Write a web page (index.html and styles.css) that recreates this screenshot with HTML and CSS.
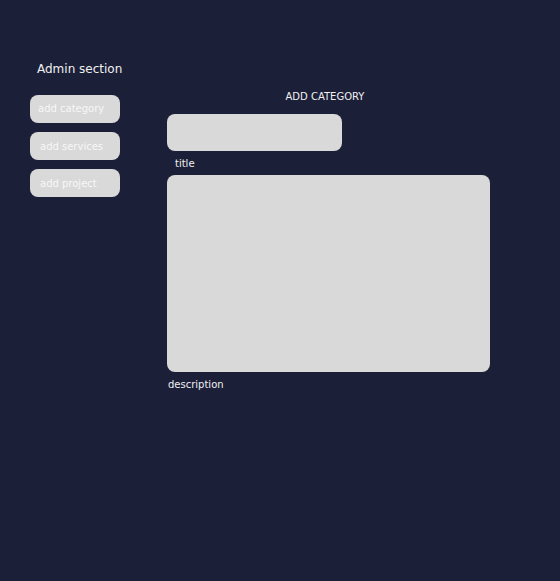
FILE: index.html
```html
<!DOCTYPE html>
<html>
<head>
<meta charset="utf-8">
<title>Admin section</title>
<link rel="stylesheet" href="styles.css">
</head>
<body>
<div class="page">
  <aside class="sidebar">
    <h1 class="sidebar-title">Admin section</h1>
    <nav class="nav">
      <a class="nav-btn nav-btn--tight">add category</a>
      <a class="nav-btn">add services</a>
      <a class="nav-btn">add project</a>
    </nav>
  </aside>
  <main class="main">
    <h2 class="form-title">ADD CATEGORY</h2>
    <div class="field-title"></div>
    <label class="label">title</label>
    <div class="field-desc"></div>
    <label class="label label--desc">description</label>
  </main>
</div>
</body>
</html>
```

FILE: styles.css
```css
html, body {
  margin: 0;
  padding: 0;
  background: #1b1f38;
  height: 100%;
}
body {
  font-family: "DejaVu Sans", "Liberation Sans", sans-serif;
  color: #f2f2f2;
}
.page {
  display: flex;
  padding: 61px 0 0 30px;
}
.sidebar {
  width: 90px;
  display: flex;
  flex-direction: column;
}
.sidebar-title {
  margin: 0 0 18px 7px;
  font-size: 12px;
  line-height: 16px;
  font-weight: normal;
  white-space: nowrap;
  color: #f0f0f0;
}
.nav {
  display: flex;
  flex-direction: column;
  gap: 9px;
}
.nav-btn {
  display: block;
  height: 28px;
  line-height: 29px;
  background: #d9d9d9;
  border-radius: 8px;
  padding-left: 10px;
  font-size: 10px;
  color: #f7f7f7;
  white-space: nowrap;
}
.nav-btn--tight {
  padding-left: 8px;
  line-height: 27px;
}
.main {
  margin-left: 47px;
  padding-top: 29px;
  width: 323px;
  display: flex;
  flex-direction: column;
}
.form-title {
  margin: 0 7px 10px 0;
  font-size: 10px;
  line-height: 14px;
  font-weight: normal;
  text-align: center;
  color: #f0f0f0;
}
.field-title {
  width: 175px;
  height: 37px;
  background: #d9d9d9;
  border-radius: 8px;
}
.label {
  display: block;
  margin: 6px 0 4px 8px;
  font-size: 10px;
  line-height: 14px;
  color: #f0f0f0;
}
.label--desc {
  margin-left: 1px;
}
.field-desc {
  width: 323px;
  height: 197px;
  background: #d9d9d9;
  border-radius: 8px;
}
```
